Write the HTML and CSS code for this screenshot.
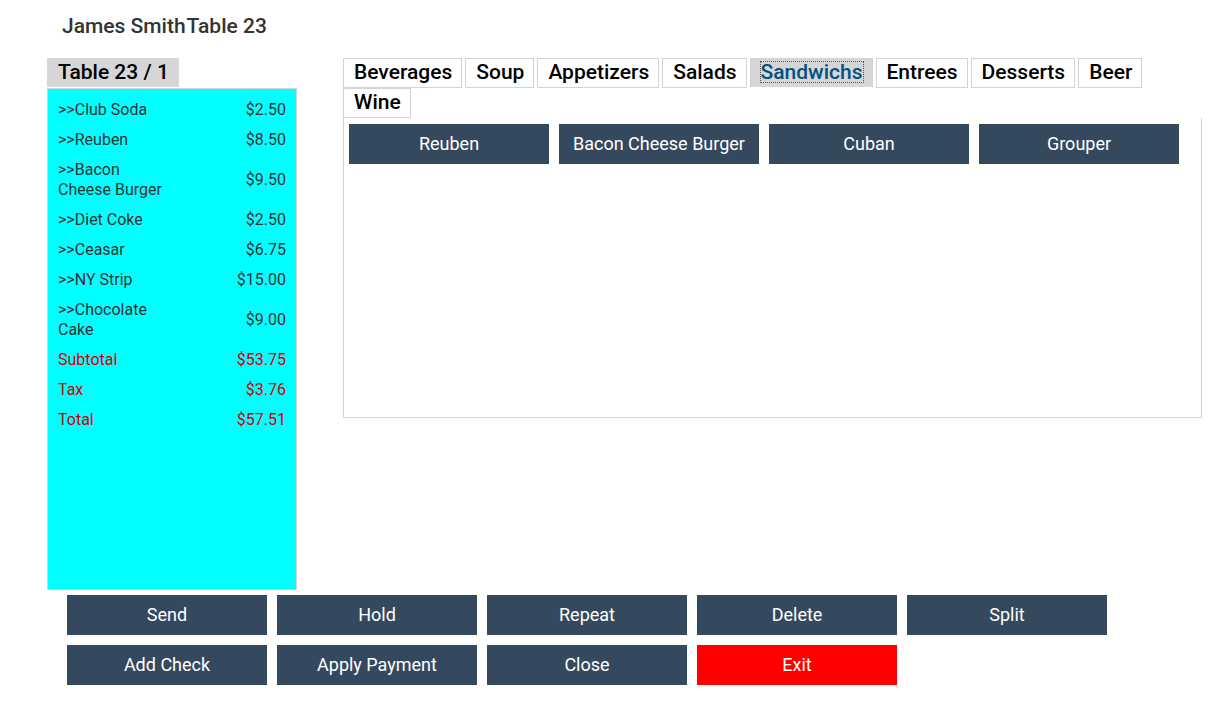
FILE: index.html
```html
<!DOCTYPE html>
<html lang="en">
<head>
<meta charset="utf-8">
<meta name="viewport" content="width=device-width, initial-scale=1">
<title>Table 23</title>
<link rel="stylesheet" href="styles.css">
</head>
<body>
<header class="page-header">
  <h1 class="page-title"><span>James Smith</span><span>Table 23</span></h1>
</header>
<main class="workspace">
  <section class="check">
    <h2 class="check-tab">Table 23 / 1</h2>
    <div class="check-panel">
      <table class="order">
        <tbody>
          <tr><td class="item">&gt;&gt;Club Soda</td><td class="price">$2.50</td></tr>
          <tr><td class="item">&gt;&gt;Reuben</td><td class="price">$8.50</td></tr>
          <tr><td class="item">&gt;&gt;Bacon Cheese Burger</td><td class="price">$9.50</td></tr>
          <tr><td class="item">&gt;&gt;Diet Coke</td><td class="price">$2.50</td></tr>
          <tr><td class="item">&gt;&gt;Ceasar</td><td class="price">$6.75</td></tr>
          <tr><td class="item">&gt;&gt;NY Strip</td><td class="price">$15.00</td></tr>
          <tr><td class="item">&gt;&gt;Chocolate Cake</td><td class="price">$9.00</td></tr>
        </tbody>
        <tfoot class="totals">
          <tr><td class="item">Subtotal</td><td class="price">$53.75</td></tr>
          <tr><td class="item">Tax</td><td class="price">$3.76</td></tr>
          <tr><td class="item">Total</td><td class="price">$57.51</td></tr>
        </tfoot>
      </table>
    </div>
  </section>
  <section class="menu">
    <nav class="tabs">
      <a class="tab" href="#beverages"><span class="tab-label">Beverages</span></a>
      <a class="tab" href="#soup"><span class="tab-label">Soup</span></a>
      <a class="tab" href="#appetizers"><span class="tab-label">Appetizers</span></a>
      <a class="tab" href="#salads"><span class="tab-label">Salads</span></a>
      <a class="tab tab-active" href="#sandwichs" aria-current="true"><span class="tab-label">Sandwichs</span></a>
      <a class="tab" href="#entrees"><span class="tab-label">Entrees</span></a>
      <a class="tab" href="#desserts"><span class="tab-label">Desserts</span></a>
      <a class="tab" href="#beer"><span class="tab-label">Beer</span></a>
      <a class="tab" href="#wine"><span class="tab-label">Wine</span></a>
    </nav>
    <div class="menu-panel">
      <button class="button" type="button">Reuben</button>
      <button class="button" type="button">Bacon Cheese Burger</button>
      <button class="button" type="button">Cuban</button>
      <button class="button" type="button">Grouper</button>
    </div>
  </section>
</main>
<footer class="actions">
  <button class="button" type="button">Send</button>
  <button class="button" type="button">Hold</button>
  <button class="button" type="button">Repeat</button>
  <button class="button" type="button">Delete</button>
  <button class="button" type="button">Split</button>
  <button class="button" type="button">Add Check</button>
  <button class="button" type="button">Apply Payment</button>
  <button class="button" type="button">Close</button>
  <button class="button button-exit" type="button">Exit</button>
</footer>
</body>
</html>
```

FILE: styles.css
```css
* {
  box-sizing: border-box;
}

body {
  margin: 0;
  background: #fff;
  color: #333;
  font-family: Roboto, "Liberation Sans", sans-serif;
  font-size: 16px;
  line-height: 20px;
}

.page-header {
  padding: 16px 62px 22px;
}

.page-title {
  display: flex;
  gap: 1px;
  margin: 0;
  font-size: 21px;
  font-weight: 500;
  line-height: 20px;
}

.workspace {
  display: flex;
  align-items: flex-start;
  gap: 46px;
  padding: 0 22px 0 47px;
}

.check {
  flex: none;
  width: 250px;
}

.check-tab {
  width: fit-content;
  margin: 0 0 1px;
  padding: 4px 10px 5px 11px;
  background: #d6d6d6;
  color: #000;
  font-size: 21px;
  font-weight: 500;
  line-height: 20px;
}

.check-panel {
  min-height: 502px;
  padding: 6px 5px;
  border: 1px solid #d3d3d3;
  background: #0ff;
}

.order {
  width: 100%;
  border-collapse: collapse;
}

.order td {
  padding: 5px;
}

.item {
  width: 125px;
}

.price {
  text-align: right;
}

.totals {
  color: #c00;
}

.menu {
  flex: 1;
  min-width: 0;
}

.tabs {
  display: flex;
  flex-wrap: wrap;
  column-gap: 3px;
}

.tab {
  padding: 3px 9px 5px 10px;
  border: 1px solid #d3d3d3;
  color: #000;
  font-size: 21px;
  font-weight: 500;
  line-height: 20px;
  text-decoration: none;
}

.tab-label {
  display: block;
}

.tab-active {
  padding: 2px 8px 4px 9px;
  background: #d6d6d6;
  background-clip: padding-box;
  border-bottom-color: #fff;
  color: #00527f;
}

.tab-active .tab-label {
  border: 1px dotted #555;
}

.menu-panel {
  display: flex;
  flex-wrap: wrap;
  align-content: flex-start;
  gap: 10px;
  min-height: 300px;
  padding: 6px 5px 5px;
  border: 1px solid #d3d3d3;
  border-top: 0;
}

.button {
  width: 200px;
  height: 40px;
  padding: 0;
  border: 0;
  background: #34495e;
  color: #fff;
  font-family: inherit;
  font-size: 18px;
  line-height: 20px;
}

.button-exit {
  background: #f00;
}

.actions {
  display: flex;
  flex-wrap: wrap;
  gap: 10px;
  padding: 5px 67px 18px;
}
```
